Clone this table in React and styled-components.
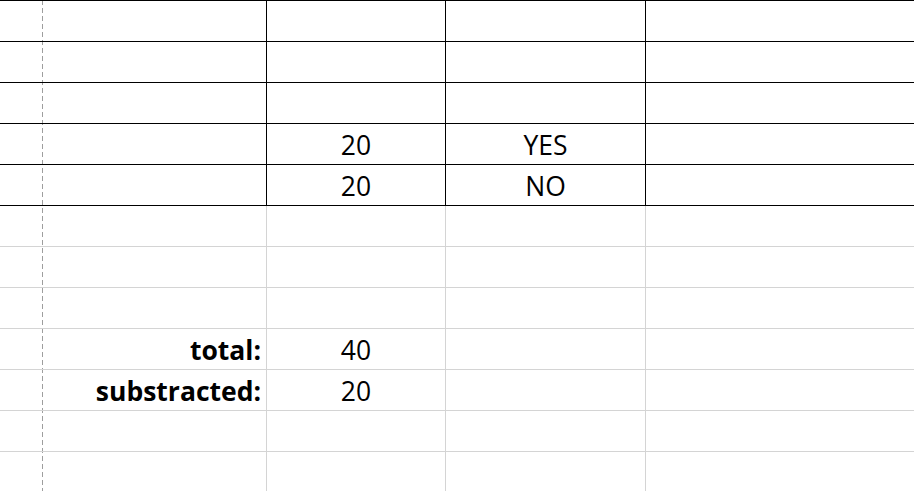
import React from 'react';
import styled, { createGlobalStyle } from 'styled-components';

const GlobalStyle = createGlobalStyle`
  html, body {
    margin: 0;
    padding: 0;
    background: #ffffff;
  }
  body {
    font-family: "Open Sans", "Liberation Sans", sans-serif;
    color: #000000;
  }
`;

const Page = styled.div`
  position: relative;
  isolation: isolate;
  height: 100vh;
  overflow: hidden;
`;

// page break marker that Excel draws over the grid
const PageBreak = styled.div`
  position: absolute;
  top: 0;
  bottom: 0;
  left: 42px;
  width: 1px;
  z-index: -1;
  background: repeating-linear-gradient(
    to bottom,
    #9e9e9e 0 5px,
    transparent 5px 8px
  );
`;

const Sheet = styled.div`
  display: grid;
  grid-template-columns: 267px 179px 200px 1fr;
  grid-auto-rows: 41px;
  border-top: 1px solid #000000;
`;

const Cell = styled.div`
  box-sizing: border-box;
  display: flex;
  align-items: center;
  justify-content: ${p => (p.$align === 'right' ? 'flex-end' : 'center')};
  padding: 2px ${p => (p.$align === 'right' ? '5px' : '0')} 0 0;
  height: 41px;
  line-height: 38px;
  font-size: 26.5px;
  font-weight: ${p => (p.$bold ? 700 : 400)};
  white-space: nowrap;
  border-bottom: 1px solid ${p => (p.$framed ? '#000000' : '#d4d4d4')};
  border-right: ${p => (p.$last ? 'none' : `1px solid ${p.$framed ? '#000000' : '#d4d4d4'}`)};
`;

const rows = [
  { framed: true, cells: ['', '', '', ''] },
  { framed: true, cells: ['', '', '', ''] },
  { framed: true, cells: ['', '', '', ''] },
  { framed: true, cells: ['', '20', 'YES', ''] },
  { framed: true, cells: ['', '20', 'NO', ''] },
  { cells: ['', '', '', ''] },
  { cells: ['', '', '', ''] },
  { cells: ['', '', '', ''] },
  { label: true, cells: ['total:', '40', '', ''] },
  { label: true, cells: ['substracted:', '20', '', ''] },
  { cells: ['', '', '', ''] },
  { cells: ['', '', '', ''] },
];

const App = () => {
  return (
    <Page>
      <GlobalStyle />
      <PageBreak />
      <Sheet>
        {rows.map((row, r) =>
          row.cells.map((value, c) => (
            <Cell
              key={`${r}-${c}`}
              $framed={row.framed}
              $last={c === 3}
              $align={c === 0 ? 'right' : 'center'}
              $bold={row.label && c === 0}
            >
              {value}
            </Cell>
          ))
        )}
      </Sheet>
    </Page>
  );
};

export default App;
